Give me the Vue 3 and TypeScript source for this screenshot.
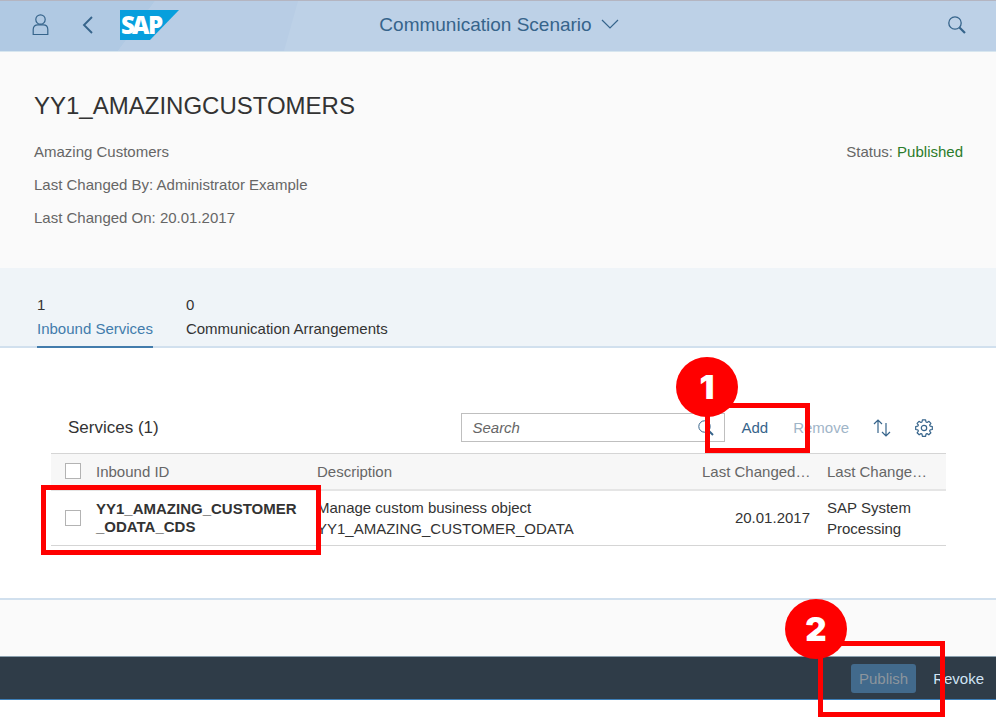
<script setup lang="ts">
import { ref } from 'vue'

interface Tab {
  count: number
  label: string
}

interface Service {
  id: string[]
  description: string[]
  changedOn: string
  changedBy: string
}

const tabs: Tab[] = [
  { count: 1, label: 'Inbound Services' },
  { count: 0, label: 'Communication Arrangements' },
]
const activeTab = ref(0)
const query = ref('')

const services: Service[] = [
  {
    id: ['YY1_AMAZING_CUSTOMER', '_ODATA_CDS'],
    description: ['Manage custom business object', 'YY1_AMAZING_CUSTOMER_ODATA'],
    changedOn: '20.01.2017',
    changedBy: 'SAP System Processing',
  },
]
</script>

<template>
  <div class="page">
    <header class="shell">
      <svg class="shell-bg" viewBox="0 0 300 50" width="300" height="50" aria-hidden="true">
        <path d="M0 0H155L118 50H0Z" fill="#b0c9e3" />
        <path d="M155 0H298L284 50H118Z" fill="#b8cde5" />
      </svg>
      <div class="shell-start">
        <button class="icon-btn" type="button" aria-label="User">
          <svg width="17" height="22" viewBox="0 0 17 22" fill="none" stroke="#36648b" stroke-width="1.200">
            <circle cx="8.500" cy="5.500" r="4.700" />
            <path d="M1.200 20.500V15.500C1.200 12.300 3.200 10.800 5.800 10.800H11.200C13.800 10.800 15.800 12.300 15.800 15.500V20.500Z" />
          </svg>
        </button>
        <button class="icon-btn back" type="button" aria-label="Back">
          <svg width="12" height="18" viewBox="0 0 12 18" fill="none" stroke="#36648b" stroke-width="1.900">
            <path d="M10 1L2 9L10 17" />
          </svg>
        </button>
        <a class="logo" href="#" aria-label="SAP">
          <svg width="59" height="30" viewBox="0 0 59 30">
            <path d="M0 0H59L30 30H0Z" fill="#079fdd" />
            <text class="logo-text" x="1 12 28" y="24">SAP</text>
          </svg>
        </a>
      </div>
      <button class="shell-title" type="button">
        Communication Scenario
        <svg width="18" height="10" viewBox="0 0 18 10" fill="none" stroke="#36648b" stroke-width="1.200">
          <path d="M1 1L9 9L17 1" />
        </svg>
      </button>
      <div class="shell-end">
        <button class="icon-btn" type="button" aria-label="Search">
          <svg width="18" height="18" viewBox="0 0 18 18" fill="none" stroke="#36648b">
            <circle cx="7" cy="7" r="6.200" stroke-width="1.300" />
            <path d="M11.500 11.500L17 17" stroke-width="2.200" />
          </svg>
        </button>
      </div>
    </header>

    <section class="object">
      <h1>YY1_AMAZINGCUSTOMERS</h1>
      <div class="facts">
        <div class="facts-list">
          <p>Amazing Customers</p>
          <p>Last Changed By: Administrator Example</p>
          <p>Last Changed On: 20.01.2017</p>
        </div>
        <p>Status: <span class="positive">Published</span></p>
      </div>
    </section>

    <nav class="tabs">
      <button
        v-for="(tab, i) in tabs"
        :key="tab.label"
        type="button"
        class="tab"
        :class="{ active: i === activeTab }"
        @click="activeTab = i"
      >
        <span class="tab-count">{{ tab.count }}</span>
        <span class="tab-label">{{ tab.label }}</span>
      </button>
    </nav>

    <main class="content">
      <div class="toolbar">
        <h2>Services (1)</h2>
        <div class="search">
          <input v-model="query" type="text" placeholder="Search" aria-label="Search" />
          <svg width="16" height="16" viewBox="0 0 16 16" fill="none" stroke="#36648b">
            <circle cx="6.500" cy="6.500" r="5.700" />
            <path d="M10.500 10.500L15 15" stroke-width="2" />
          </svg>
        </div>
        <button class="text-btn" type="button">Add</button>
        <button class="text-btn remove" type="button" disabled>Remove</button>
        <button class="icon-btn sort" type="button" aria-label="Sort">
          <svg width="18" height="18" viewBox="0 0 18 18" fill="none" stroke="#36648b" stroke-width="1.200">
            <path d="M5 14V1M1 5L5 1L9 5M13 4V17M9 13L13 17L17 13" />
          </svg>
        </button>
        <button class="icon-btn gear" type="button" aria-label="Settings">
          <svg width="18" height="18" viewBox="0 0 18 18" fill="none" stroke="#36648b" stroke-width="1.200" stroke-linejoin="round">
            <path d="M7.400 .8H10.600L11 3L12.100 3.500L14 2.300L15.900 4.300L14.600 6.100L15.100 7.100L17.300 7.500V10.500L15.100 10.900L14.600 12L15.900 13.800L13.800 15.800L12 14.600L11 15.100L10.600 17.300H7.400L7 15.100L6 14.600L4.200 15.800L2.100 13.800L3.400 12L2.900 10.900L.7 10.500V7.500L2.900 7.100L3.400 6.100L2.100 4.300L4 2.300L5.900 3.500L7 3Z" />
            <circle cx="9" cy="9" r="2.700" />
          </svg>
        </button>
        <div class="frame frame-add"></div>
        <div class="step step-add">1</div>
      </div>

      <table>
        <colgroup>
          <col class="col-check" />
          <col class="col-id" />
          <col />
          <col class="col-on" />
          <col class="col-by" />
        </colgroup>
        <thead>
          <tr>
            <th><input type="checkbox" aria-label="Select all services" /></th>
            <th>Inbound ID</th>
            <th>Description</th>
            <th class="end">Last Changed…</th>
            <th>Last Change…</th>
          </tr>
        </thead>
        <tbody>
          <tr v-for="service in services" :key="service.id.join('')">
            <td class="check-cell">
              <input type="checkbox" :aria-label="service.id.join('')" />
              <div class="frame frame-id"></div>
            </td>
            <td class="id">
              <div v-for="line in service.id" :key="line">{{ line }}</div>
            </td>
            <td>
              <div v-for="line in service.description" :key="line">{{ line }}</div>
            </td>
            <td class="end">{{ service.changedOn }}</td>
            <td>{{ service.changedBy }}</td>
          </tr>
        </tbody>
      </table>
    </main>

    <div class="spacer"></div>

    <footer class="footer">
      <button class="publish" type="button" disabled>Publish</button>
      <button class="revoke" type="button">Revoke</button>
      <div class="frame frame-publish"></div>
      <div class="step step-publish">2</div>
    </footer>
  </div>
</template>

<style>
body {
  margin: 0;
  background: #fff;
}
</style>

<style scoped>
.page {
  font-family: "Liberation Sans", Arial, sans-serif;
  font-size: 15px;
  line-height: 21px;
  color: #333;
  padding-bottom: 17px;
}

*,
*::before {
  box-sizing: border-box;
}

h1,
h2,
p {
  margin: 0;
  font-weight: 400;
}

button {
  font: inherit;
  border: 0;
  padding: 0;
  background: none;
  cursor: pointer;
}

button:disabled {
  cursor: default;
}

svg {
  display: block;
}

.shell {
  position: relative;
  display: grid;
  grid-template-columns: 1fr auto 1fr;
  align-items: center;
  height: 52px;
  padding: 0 30px 2px 32px;
  border-top: 1px solid #b4b5c1;
  border-bottom: 1px solid #d7e6ef;
  background: #bdd1e7;
}

.shell-bg {
  position: absolute;
  left: 0;
  top: 0;
}

.shell-start {
  position: relative;
  display: flex;
  align-items: center;
}

.back {
  margin-left: 33px;
}

.logo {
  margin-left: 26px;
}

.logo svg {
  overflow: visible;
}

.logo-text {
  font-family: "Open Sans", sans-serif;
  font-weight: 800;
  font-size: 24px;
  fill: #fff;
}

.shell-title {
  display: flex;
  align-items: center;
  gap: 9px;
  padding-bottom: 2px;
  font-size: 19px;
  color: #36648b;
}

.shell-end {
  display: flex;
  justify-content: flex-end;
}

.object {
  background: #fafafa;
  padding: 38px 33px 40px 34px;
}

h1 {
  font-size: 24px;
  line-height: 32px;
}

.facts {
  display: flex;
  justify-content: space-between;
  margin-top: 19px;
  color: #666;
}

.facts-list {
  display: grid;
  gap: 12px;
}

.positive {
  color: #2b7c2b;
}

.tabs {
  display: flex;
  gap: 33px;
  padding: 26px 37px 0;
  background: #eff4f8;
  border-bottom: 2px solid #d1e0ee;
}

.tab {
  display: grid;
  text-align: left;
  color: #333;
  gap: 2px;
  padding-bottom: 6px;
  margin-bottom: -2px;
  border-bottom: 2px solid transparent;
}

.tab-label {
  line-height: 23px;
}

.tab.active {
  border-color: #427cac;
}

.tab.active .tab-label {
  color: #427cac;
}

.content {
  padding: 65px 50px 52px 51px;
  border-bottom: 2px solid #d1e0ee;
}

.toolbar {
  position: relative;
  display: flex;
  align-items: center;
  height: 29px;
  padding: 0 13px 0 17px;
}

h2 {
  flex: 1;
  font-size: 17px;
}

.search {
  display: flex;
  align-items: center;
  width: 264px;
  height: 29px;
  padding: 0 10px;
  border: 1px solid #bfbfbf;
  background: #fff;
}

.search input {
  flex: 1;
  min-width: 0;
  padding: 0;
  border: 0;
  outline: 0;
  background: none;
  font: inherit;
  color: #333;
}

.search input::placeholder {
  font-style: italic;
  color: #666;
  opacity: 1;
}

.text-btn {
  margin-left: 16px;
  color: #36648b;
}

.remove {
  margin-left: 25px;
  color: #9fb5c8;
}

.sort,
.gear {
  margin-left: 24px;
}

table {
  width: 100%;
  margin-top: 11px;
  border-collapse: collapse;
  table-layout: fixed;
}

.col-check {
  width: 37px;
}

.col-id {
  width: 221px;
}

.col-on {
  width: 125px;
}

.col-by {
  width: 127px;
}

th,
td {
  padding: 0 8px;
  text-align: left;
  vertical-align: middle;
  border-bottom: 1px solid #d5d5d5;
}

th {
  height: 36px;
  font-weight: 400;
  color: #666;
  background: #f7f7f7;
  border-top: 1px solid #d5d5d5;
  border-bottom: 2px solid #e5e5e5;
  white-space: nowrap;
}

td {
  height: 56px;
}

th:first-child,
td:first-child {
  padding: 0 0 0 14px;
}

th.end,
td.end {
  padding-right: 9px;
  text-align: right;
}

.id {
  font-weight: 700;
  line-height: 18px;
}

input[type="checkbox"] {
  appearance: none;
  display: block;
  width: 16px;
  height: 16px;
  margin: 0;
  border: 1px solid #b3b3b3;
  background: #fff;
}

.check-cell {
  position: relative;
}

.spacer {
  height: 56px;
  background: #fafafa;
}

.footer {
  position: relative;
  display: flex;
  justify-content: flex-end;
  align-items: center;
  gap: 17px;
  height: 44px;
  padding-right: 12px;
  background: #2f3c48;
  border-top: 1px solid #8ba0ae;
  border-bottom: 1px solid #3d7fb8;
}

.publish {
  height: 29px;
  padding: 0 8px;
  border-radius: 3px;
  background: #426a8c;
  color: #8c959d;
}

.revoke {
  color: #d1e4f5;
}

.frame {
  position: absolute;
  border: 5px solid #f00;
  pointer-events: none;
}

.step {
  position: absolute;
  display: flex;
  align-items: center;
  justify-content: center;
  width: 62px;
  height: 60px;
  border-radius: 50%;
  background: #f00;
  color: #fff;
  font-family: Inter, sans-serif;
  font-weight: 900;
  font-size: 33px;
}

.frame-add {
  right: 136px;
  top: -10px;
  width: 105px;
  height: 50px;
}

.step-add {
  right: 208px;
  top: -56px;
}

.frame-id {
  left: -10px;
  top: -6px;
  width: 280px;
  height: 70px;
}

.frame-publish {
  right: 51px;
  top: -16px;
  width: 127px;
  height: 76px;
}

.step-publish {
  right: 149px;
  top: -58px;
}
</style>
